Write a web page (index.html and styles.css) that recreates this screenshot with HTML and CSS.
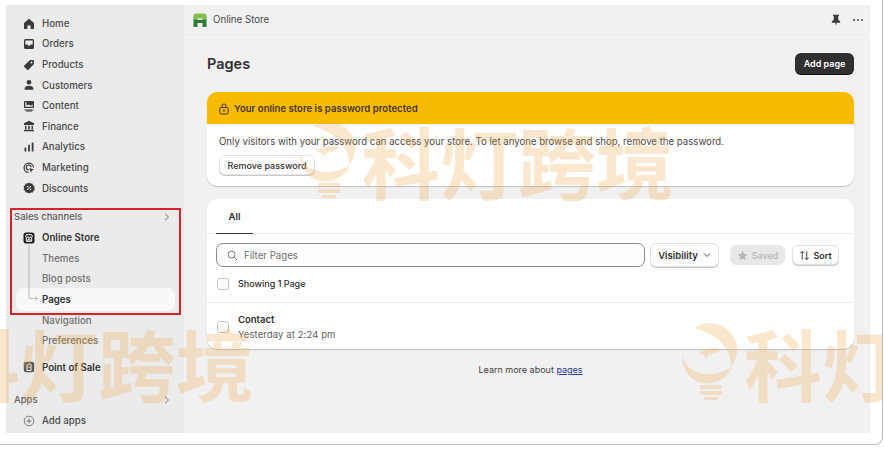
FILE: index.html
```html
<!DOCTYPE html>
<html lang="en">
<head>
<meta charset="utf-8">
<title>Pages</title>
<link rel="stylesheet" href="styles.css">
</head>
<body>
<div class="frame">
  <div class="app">
    <nav class="sidebar">
      <ul class="nav-list">
        <li class="nav-row"><svg class="ico" viewBox="0 0 12 12"><path d="M6 .8 1 5v6h3.4V7.6h3.2V11H11V5z"/></svg>Home</li>
        <li class="nav-row"><svg class="ico" viewBox="0 0 12 12"><path fill-rule="evenodd" d="M2.5 1h7A1.5 1.5 0 0 1 11 2.500v7A1.500 1.500 0 0 1 9.500 11h-7A1.500 1.500 0 0 1 1 9.500v-7A1.500 1.500 0 0 1 2.500 1zm-.2 1.400V6.500h2.200l.8 1.200h1.400l.8-1.200h2.200V2.400z"/></svg>Orders</li>
        <li class="nav-row"><svg class="ico" viewBox="0 0 12 12"><path fill-rule="evenodd" d="M7 1h3a1 1 0 0 1 1 1v3L5.500 10.700a1 1 0 0 1-1.400 0L1.300 7.900a1 1 0 0 1 0-1.400zm1.500 1.500a1 1 0 1 0 0 2 1 1 0 0 0 0-2z"/></svg>Products</li>
        <li class="nav-row"><svg class="ico" viewBox="0 0 12 12"><circle cx="6" cy="3.200" r="2.300"/><path d="M1.500 9.800C1.800 7.800 3.500 6.800 6 6.800s4.200 1 4.500 3c.1.500-.2.900-.7.900H2.200c-.5 0-.8-.4-.7-.9z"/></svg>Customers</li>
        <li class="nav-row"><svg class="ico" viewBox="0 0 12 12"><path fill-rule="evenodd" d="M2 1h8a1 1 0 0 1 1 1v5a1 1 0 0 1-1 1H2a1 1 0 0 1-1-1V2a1 1 0 0 1 1-1zm.3 1.300v4.400h7.400V4.500L7.500 5.800 6 4.500 3.500 5.500V2.300zM1.500 9.400h9v1h-9zM3 10.800h6v.7H3z"/></svg>Content</li>
        <li class="nav-row"><svg class="ico" viewBox="0 0 12 12"><path d="M6 .8 11 3.200V5H1V3.200zM2 5.800h1.500v3.400H2zM5.200 5.800h1.600v3.400H5.200zM8.500 5.800H10v3.400H8.500zM1 9.800h10v1.400H1z"/></svg>Finance</li>
        <li class="nav-row"><svg class="ico" viewBox="0 0 12 12"><rect x="1.500" y="6.500" width="1.800" height="4" rx=".6"/><rect x="5.100" y="3.800" width="1.800" height="6.700" rx=".6"/><rect x="8.700" y="1.500" width="1.800" height="9" rx=".6"/></svg>Analytics</li>
        <li class="nav-row"><svg class="ico" viewBox="0 0 12 12"><path fill="none" stroke="currentColor" stroke-width="1.200" d="M5.500 10.500a4.700 4.700 0 1 1 5-5"/><path fill="none" stroke="currentColor" stroke-width="1.200" d="M5.800 7.800a2.400 2.400 0 1 1 2.300-2.500"/><path d="M6 6l5 1.600-2 1 -1 2z"/></svg>Marketing</li>
        <li class="nav-row"><svg class="ico" viewBox="0 0 12 12"><path fill-rule="evenodd" d="M6 .4 7.500 1.500l1.900-.1.500 1.800 1.500 1.100L11.300 6l.6 1.700-1.500 1.100-.5 1.800-1.900-.1L6 11.600l-1.500-1.100-1.900.1-.5-1.800L.6 7.700 1.200 6 .6 4.300l1.500-1.100.5-1.800 1.900.1zM4.500 3.700a.8.800 0 1 0 0 1.600.8.800 0 0 0 0-1.600zm3 3a.8.800 0 1 0 0 1.600.8.800 0 0 0 0-1.600zM7.600 3.800 3.800 7.600l.6.600 3.800-3.800z"/></svg>Discounts</li>
      </ul>

      <div class="section-head sales-head"><span>Sales channels</span><svg class="chev" viewBox="0 0 8 8"><path d="M2 .8 5.500 4 2 7.200"/></svg></div>
      <ul class="nav-list">
        <li class="nav-row strong"><svg class="ico store" viewBox="0 0 12 12"><rect x=".5" y=".5" width="11" height="11" rx="2.500"/><path fill="none" stroke="#fff" stroke-width="1" d="M2.700 4.500 3.200 2.700h5.600l.5 1.800a1 1 0 0 1-2 .2 1.300 1.300 0 0 1-2.600 0 1 1 0 0 1-2 -.2zM3.300 6v3.300h5.400V6M5 9.300V7.300h2v2"/></svg>Online Store</li>
        <li class="nav-row sub">Themes</li>
        <li class="nav-row sub">Blog posts</li>
        <li class="nav-row sub current">Pages</li>
        <li class="nav-row sub">Navigation</li>
        <li class="nav-row sub">Preferences</li>
      </ul>
      <div class="nav-row strong pos"><svg class="ico posico" viewBox="0 0 12 12"><rect x=".8" y=".8" width="10.400" height="10.400" rx="2.500"/><path fill="none" stroke="#fff" d="M4 9.500V4.500L7 2.500 8 3.500V9.500zM5.500 6.500h1.200"/></svg>Point of Sale</div>
      <div class="section-head apps-head"><span>Apps</span><svg class="chev" viewBox="0 0 8 8"><path d="M2 .8 5.500 4 2 7.200"/></svg></div>
      <div class="nav-row"><svg class="ico addico" viewBox="0 0 12 12"><circle cx="6" cy="6" r="4.800"/><path d="M6 3.500v5M3.500 6h5"/></svg>Add apps</div>

      <svg class="tree-line" viewBox="0 0 16 56"><path d="M1 0V52.500a1 1 0 0 0 1 1h7M7.500 51.500l2 2-2 2"/></svg>
      <div class="annotation"></div>
    </nav>

    <main class="main">
      <header class="topbar">
        <div class="topbar-title">
          <svg class="store-logo" viewBox="0 0 14 14"><path fill="#2f7a3b" d="M.5 6h4v8h-4zM9.500 6h4v8h-4zM4.500 7h5v3h-5z"/><path fill="#84bd4f" d="M.5 3a2.500 2.500 0 0 1 2.500-2.500h8A2.500 2.500 0 0 1 13.500 3v3.500h-4V5.500h-5v1h-4z"/></svg>
          <span>Online Store</span>
        </div>
        <div class="topbar-actions">
          <svg class="pin" viewBox="0 0 12 12"><path d="M3 .8h6v1.200L8 2.500 8.500 6 10.200 7.500v1.200H6.700L6 11.800 5.300 8.700H1.800V7.500L3.500 6 4 2.500 3 2z"/></svg>
          <span class="dots"><i></i><i></i><i></i></span>
        </div>
      </header>

      <div class="content">
        <div class="title-row">
          <h1>Pages</h1>
          <button class="btn-primary">Add page</button>
        </div>

        <section class="card banner">
          <div class="banner-head">
            <svg class="lock" viewBox="0 0 12 12"><rect x="1.800" y="4.500" width="8.400" height="6.500" rx="1.600"/><path d="M3.800 4.500V3.200a2.200 2.200 0 0 1 4.400 0v1.300"/><circle cx="6" cy="7.700" r=".7"/></svg>
            <span>Your online store is password protected</span>
          </div>
          <div class="banner-body">
            <p>Only visitors with your password can access your store. To let anyone browse and shop, remove the password.</p>
            <button class="btn">Remove password</button>
          </div>
        </section>

        <section class="card list">
          <div class="tabs"><span class="tab">All</span></div>
          <div class="filters">
            <div class="search">
              <svg class="search-ico" viewBox="0 0 12 12"><circle cx="5" cy="5" r="3.800"/><path d="M7.800 7.800 11 11"/></svg>
              <span>Filter Pages</span>
            </div>
            <button class="btn visibility">Visibility<svg class="down" viewBox="0 0 8 8"><path d="M1 2.500 4 5.500l3-3"/></svg></button>
            <button class="btn saved"><svg class="star" viewBox="0 0 12 12"><path d="M6 .8 7.600 4.300 11.300 4.700 8.600 7.300 9.300 11 6 9.200 2.700 11 3.400 7.300.7 4.700 4.400 4.300z"/></svg>Saved</button>
            <button class="btn sort"><svg class="sort-ico" viewBox="0 0 12 12"><path d="M3.500 10.500V1.500M1.300 3.700 3.500 1.500l2.200 2.200M8.500 1.500v9M6.300 8.300l2.200 2.200 2.200-2.200"/></svg>Sort</button>
          </div>
          <div class="showing"><span class="check"></span><span>Showing 1 Page</span></div>
          <div class="page-row">
            <span class="check"></span>
            <div class="page-text">
              <strong>Contact</strong>
              <span>Yesterday at 2:24 pm</span>
            </div>
          </div>
        </section>

        <p class="learn">Learn more about <a href="#">pages</a></p>
      </div>
    </main>
  </div>

  <div class="mark mark-a"><svg class="bulb" viewBox="0 0 56 78"><path d="M12 5C28-7 57 4 55 30 54 36 52 40 49 44 50 30 40 12 12 5zM0 32C4 50 26 58 50 44 44 58 30 62 20 60 8 58 0 46 0 32zM16 30C22 26 30 24 40 26 34 30 28 32 26 32L24 36 22 32zM18 62h22v4H18zM18 68h22v4H18zM22 74h14v3H22z"/></svg><span>科灯跨境</span></div>
  <div class="mark mark-b"><span>科灯跨境</span></div>
  <div class="mark mark-c"><svg class="bulb" viewBox="0 0 56 78"><path d="M12 5C28-7 57 4 55 30 54 36 52 40 49 44 50 30 40 12 12 5zM0 32C4 50 26 58 50 44 44 58 30 62 20 60 8 58 0 46 0 32zM16 30C22 26 30 24 40 26 34 30 28 32 26 32L24 36 22 32zM18 62h22v4H18zM18 68h22v4H18zM22 74h14v3H22z"/></svg><span>科灯跨境</span></div>
</div>
</body>
</html>
```
FILE: styles.css
```css
* { box-sizing: border-box; }
html, body { margin: 0; padding: 0; width: 884px; height: 449px; overflow: hidden; background: #fff; }
body { font-family: Inter, "Noto Sans", sans-serif; color: #303030; font-size: 9.7px; }

.frame {
  position: relative;
  width: 883px;
  height: 445px;
  border: 1px solid #bdbdbd;
  border-width: 0 1px 1px 0;
  border-radius: 0 0 8px 0;
  overflow: hidden;
  padding: 5px 12px 11px 6px;
}
.app { display: flex; height: 428px; }

.sidebar {
  position: relative;
  width: 178px;
  background: #ebebeb;
  padding: 8px 0 0 0;
  flex: none;
}
.nav-list { list-style: none; margin: 0; padding: 0; }
.nav-row {
  display: flex;
  align-items: center;
  height: 20.6px;
  padding-left: 36px;
  font-weight: 500;
  color: #4a4a4a;
  position: relative;
}
.ico { position: absolute; left: 17px; top: 4.5px; width: 12px; height: 12px; fill: #3a3a3a; color: #3a3a3a; }
.strong { color: #303030; font-weight: 600; }
.sub { color: #6f6f6f; }
.current { color: #303030; font-weight: 600; isolation: isolate; }
.current::before {
  content: "";
  position: absolute;
  left: 10px;
  top: -1px;
  width: 159px;
  height: 23px;
  background: #f8f8f8;
  border-radius: 7px;
  z-index: -1;
}
.store { fill: #1d1d1d; }
.posico { fill: #5a5a5a; }
.addico { fill: none; stroke: #6b6b6b; stroke-width: .9; }

.section-head {
  display: flex;
  align-items: center;
  justify-content: space-between;
  padding: 0 13px 0 8px;
  height: 20px;
  font-weight: 500;
  color: #5f5f5f;
  font-size: 9.5px;
}
.sales-head { margin-top: 8px; height: 21px; }
.apps-head { margin-top: 11px; height: 22px; }
.chev { width: 8px; height: 8px; fill: none; stroke: #777; stroke-width: 1; }
.pos { margin-top: 6px; }

.tree-line { position: absolute; left: 22px; top: 240px; width: 16px; height: 56px; fill: none; stroke: #b0b0b0; stroke-width: .9; }
.annotation {
  position: absolute;
  left: 4px;
  top: 203px;
  width: 171px;
  height: 107px;
  border: 2px solid #d5222c;
}

.main { flex: 1; background: #f1f1f1; display: flex; flex-direction: column; min-width: 0; }
.topbar {
  display: flex;
  align-items: center;
  justify-content: space-between;
  height: 30px;
  margin-right: 5px;
  padding: 0 2px 0 9px;
  border-bottom: 1px solid #ebebeb;
}
.topbar-title { display: flex; align-items: center; gap: 6px; color: #4a4a4a; font-weight: 400; }
.store-logo { width: 14px; height: 14px; }
.topbar-actions { display: flex; align-items: center; gap: 11px; }
.pin { width: 12px; height: 12px; fill: #3a3a3a; }
.dots { display: flex; gap: 2px; }
.dots i { width: 2px; height: 2px; background: #444; border-radius: 50%; display: block; }

.content { padding: 0 16px 0 23px; display: flex; flex-direction: column; }
.title-row { display: flex; align-items: center; justify-content: space-between; height: 56px; margin-bottom: 1px; }
h1 { margin: 0; font-size: 14.500px; font-weight: 600; color: #303030; }
button { font-family: inherit; }
.btn-primary {
  width: 59px;
  height: 21px;
  padding: 0;
  border: 0;
  border-radius: 6px;
  background: #303030;
  color: #fff;
  font-size: 9px;
  font-weight: 600;
  box-shadow: 0 1px 0 #111;
}
.card { background: #fff; border-radius: 10px; box-shadow: 0 1px 1px rgba(0,0,0,.2); overflow: hidden; }
.banner { height: 94px; margin-bottom: 13px; }
.banner-head {
  height: 32px;
  background: #f7bc00;
  display: flex;
  align-items: center;
  gap: 4px;
  padding: 1px 0 0 11px;
  font-weight: 600;
  font-size: 9.600px;
  color: #4b3300;
}
.lock { width: 12px; height: 12px; fill: none; stroke: #4b3300; stroke-width: 1; }
.banner-body { padding: 11px 12px 0; }
.banner-body p { margin: 0 0 6px; font-size: 9.630px; line-height: 14px; color: #4a4a4a; }
.btn {
  display: inline-flex;
  align-items: center;
  justify-content: center;
  height: 20px;
  padding: 0;
  background: #fff;
  border: 1px solid #e3e3e3;
  border-radius: 6px;
  box-shadow: 0 1px 0 #c9c9c9;
  color: #303030;
  font-size: 9px;
  font-weight: 500;
}
.banner-body .btn { width: 96px; }

.list { height: 150px; margin-right: 0; }
.tabs { height: 35px; border-bottom: 1px solid #ebebeb; padding-left: 9px; display: flex; }
.tab {
  width: 37px;
  height: 35px;
  display: flex;
  align-items: center;
  justify-content: center;
  font-weight: 600;
  font-size: 9.500px;
  border-bottom: 1px solid #303030;
}
.filters { display: flex; align-items: center; margin: 9px 15px 0 9px; height: 24px; }
.search {
  width: 429px;
  height: 24px;
  border: 1px solid #8a8a8a;
  border-radius: 7px;
  background: #fdfdfd;
  display: flex;
  align-items: center;
  gap: 6px;
  padding-left: 10px;
  color: #6f6f6f;
}
.search-ico { width: 11px; height: 11px; fill: none; stroke: #6f6f6f; stroke-width: 1; }
.visibility { width: 69px; height: 24px; margin-left: 5px; font-size: 9.500px; font-weight: 600; gap: 5px; }
.down { width: 8px; height: 8px; fill: none; stroke: #444; stroke-width: 1; }
.saved { width: 55px; margin-left: 11px; gap: 4px; background: #e8e8e8; border-color: #e8e8e8; box-shadow: none; color: #b5b5b5; }
.star { width: 11px; height: 11px; fill: #b5b5b5; }
.sort { width: 47px; margin-left: 7px; gap: 3px; font-weight: 600; }
.sort-ico { width: 11px; height: 11px; fill: none; stroke: #303030; stroke-width: 1; }
.check { display: block; flex: none; width: 12px; height: 12px; border: 1px solid #c4c4c4; border-radius: 3px; background: #fff; }
.showing {
  display: flex;
  align-items: center;
  gap: 9px;
  height: 36px;
  padding: 0 0 2px 10px;
  border-bottom: 1px solid #ebebeb;
  font-size: 9px;
  font-weight: 500;
}
.page-row { display: flex; align-items: center; gap: 9px; padding: 11px 0 0 10px; }
.page-row .check { margin-top: -2px; }
.page-text { display: flex; flex-direction: column; gap: 3px; line-height: 12px; }
.page-text strong { font-weight: 600; font-size: 9.500px; }
.page-text span { color: #616161; font-size: 9.500px; letter-spacing: .1px; }
.learn { margin: 15px 0 0; text-align: center; font-size: 9px; line-height: 12px; color: #404040; }
.learn a { color: #2a3a9e; }

.mark {
  position: absolute;
  display: flex;
  align-items: center;
  height: 80px;
  font-family: "Noto Sans CJK SC", sans-serif;
  font-size: 78px;
  font-weight: 700;
  line-height: 80px;
  color: #f0a440;
  opacity: .25;
  pointer-events: none;
  white-space: nowrap;
}
.bulb { width: 56px; height: 78px; fill: #f0a440; flex: none; margin-right: 6px; }
.mark-a { left: 300px; top: 120px; }
.mark-b { left: -58px; top: 322px; }
.mark-c { left: 682px; top: 322px; }
```
